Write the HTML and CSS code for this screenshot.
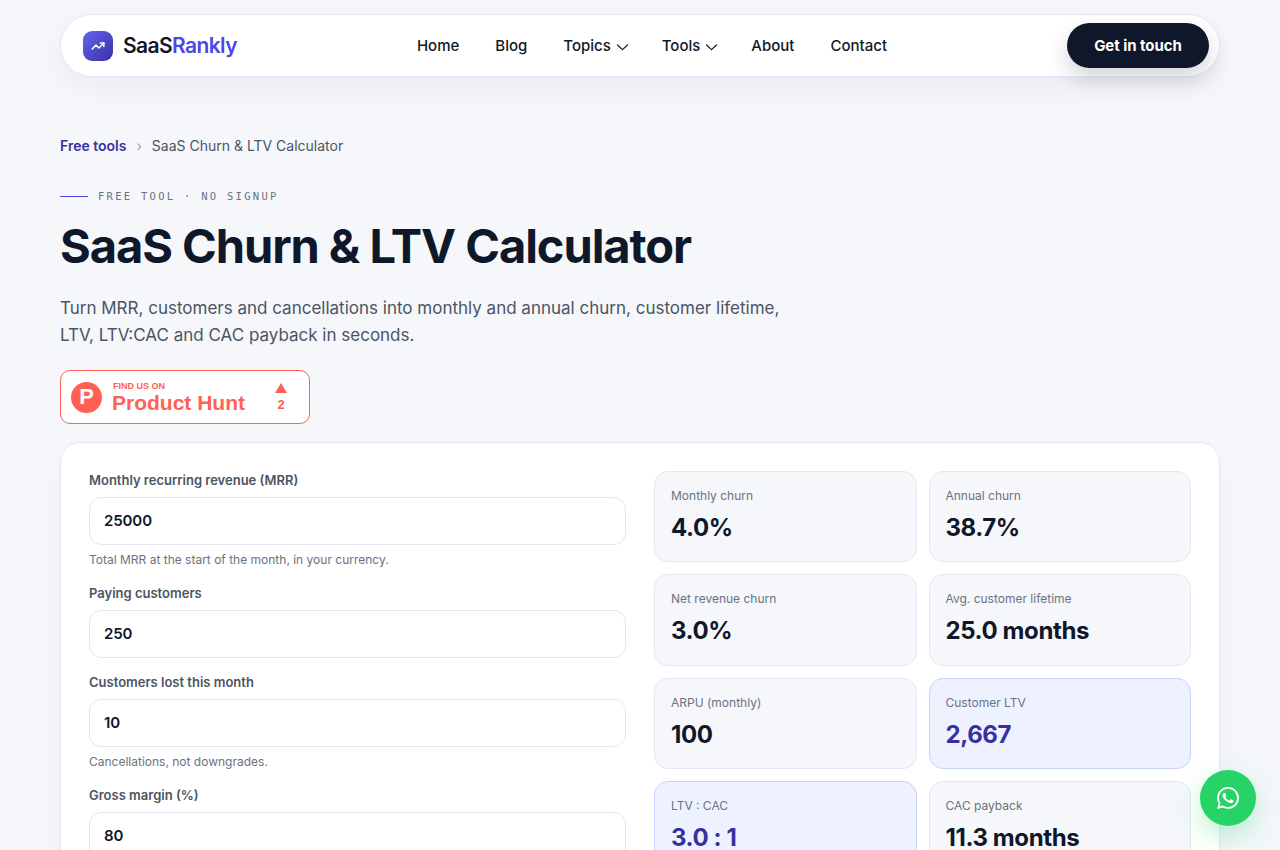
FILE: index.html
```html
<!DOCTYPE html>
<html lang="en">
<head>
<meta charset="utf-8">
<title>SaaS Churn &amp; LTV Calculator</title>
<link rel="stylesheet" href="styles.css">
</head>
<body>
<div class="page">
  <header class="nav">
    <a class="brand" href="#">
      <span class="brand-mark">
        <svg width="14" height="14" viewBox="0 0 24 24" fill="none" stroke="#fff" stroke-width="2.6" stroke-linecap="round" stroke-linejoin="round"><path d="M22 7l-8.5 8.5-5-5L2 17"/><path d="M16 7h6v6"/></svg>
      </span>
      <span class="brand-name">SaaS<span class="brand-accent">Rankly</span></span>
    </a>
    <nav class="nav-links">
      <a href="#">Home</a>
      <a href="#">Blog</a>
      <a href="#" class="has-caret">Topics<svg class="caret" width="15" height="12" viewBox="0 0 15 12" fill="none" stroke="currentColor" stroke-width="1.2" stroke-linecap="round" stroke-linejoin="round"><path d="M6.5 5l5 4.6 5-4.6"/></svg></a>
      <a href="#" class="has-caret">Tools<svg class="caret" width="15" height="12" viewBox="0 0 15 12" fill="none" stroke="currentColor" stroke-width="1.2" stroke-linecap="round" stroke-linejoin="round"><path d="M6.5 5l5 4.6 5-4.6"/></svg></a>
      <a href="#">About</a>
      <a href="#">Contact</a>
    </nav>
    <a class="cta" href="#">Get in touch</a>
  </header>

  <main>
    <div class="crumbs"><a href="#">Free tools</a><span class="crumb-sep">›</span><span>SaaS Churn &amp; LTV Calculator</span></div>
    <div class="eyebrow"><span class="eyebrow-line"></span>FREE TOOL · NO SIGNUP</div>
    <h1>SaaS Churn &amp; LTV Calculator</h1>
    <p class="lead">Turn MRR, customers and cancellations into monthly and annual churn, customer lifetime, LTV, LTV:CAC and CAC payback in seconds.</p>

    <a class="ph-badge" href="#">
      <span class="ph-logo">P</span>
      <span class="ph-text"><span class="ph-small">FIND US ON</span><span class="ph-big">Product Hunt</span></span>
      <span class="ph-votes"><span class="ph-tri"></span><span class="ph-count">2</span></span>
    </a>

    <section class="card">
      <form class="form">
        <div class="field">
          <label>Monthly recurring revenue (MRR)</label>
          <div class="input">25000</div>
          <p class="hint">Total MRR at the start of the month, in your currency.</p>
        </div>
        <div class="field">
          <label>Paying customers</label>
          <div class="input">250</div>
        </div>
        <div class="field">
          <label>Customers lost this month</label>
          <div class="input">10</div>
          <p class="hint">Cancellations, not downgrades.</p>
        </div>
        <div class="field">
          <label>Gross margin (%)</label>
          <div class="input">80</div>
        </div>
      </form>
      <div class="stats">
        <div class="stat"><div class="stat-label">Monthly churn</div><div class="stat-value">4.0%</div></div>
        <div class="stat"><div class="stat-label">Annual churn</div><div class="stat-value">38.7%</div></div>
        <div class="stat"><div class="stat-label">Net revenue churn</div><div class="stat-value">3.0%</div></div>
        <div class="stat"><div class="stat-label">Avg. customer lifetime</div><div class="stat-value">25.0 months</div></div>
        <div class="stat"><div class="stat-label">ARPU (monthly)</div><div class="stat-value">100</div></div>
        <div class="stat stat-hi"><div class="stat-label">Customer LTV</div><div class="stat-value">2,667</div></div>
        <div class="stat stat-hi"><div class="stat-label">LTV : CAC</div><div class="stat-value">3.0 : 1</div></div>
        <div class="stat"><div class="stat-label">CAC payback</div><div class="stat-value">11.3 months</div></div>
      </div>
    </section>
  </main>
</div>
<a class="wa" href="#" aria-label="WhatsApp">
  <svg width="22" height="22" viewBox="0 0 24 24" fill="#fff"><path d="M17.47 14.38c-.3-.15-1.76-.87-2.03-.97-.27-.1-.47-.15-.67.15-.2.3-.77.97-.94 1.16-.17.2-.35.22-.64.08-.3-.15-1.26-.46-2.39-1.48-.88-.79-1.48-1.76-1.65-2.06-.17-.3-.02-.46.13-.6.13-.14.3-.35.45-.52.15-.17.2-.3.3-.5.1-.2.05-.37-.03-.52-.07-.15-.67-1.61-.92-2.2-.24-.58-.49-.5-.67-.51h-.57c-.2 0-.52.07-.79.37-.27.3-1.04 1.02-1.04 2.48s1.07 2.88 1.21 3.07c.15.2 2.1 3.2 5.08 4.49.71.3 1.26.49 1.7.63.71.22 1.36.19 1.87.12.57-.09 1.76-.72 2.01-1.42.25-.69.25-1.29.17-1.41-.07-.13-.27-.2-.57-.35zM12.05 21.79h-.01a9.87 9.87 0 0 1-5.03-1.38l-.36-.21-3.74.98 1-3.65-.24-.37a9.86 9.86 0 0 1-1.51-5.26c0-5.45 4.44-9.88 9.89-9.88 2.64 0 5.12 1.03 6.99 2.9a9.83 9.83 0 0 1 2.89 6.99c0 5.45-4.44 9.88-9.88 9.88zM20.46 3.49A11.82 11.82 0 0 0 12.05 0C5.5 0 .16 5.34.16 11.89c0 2.1.55 4.14 1.59 5.95L.06 24l6.31-1.65a11.88 11.88 0 0 0 5.68 1.45h.01c6.55 0 11.89-5.34 11.89-11.89 0-3.18-1.24-6.17-3.49-8.42z"/></svg>
</a>
</body>
</html>
```
FILE: styles.css
```css
* { box-sizing: border-box; }
html, body { margin: 0; padding: 0; }
body {
  background: #f5f7fb;
  color: #0f172a;
  font-family: Inter, "Liberation Sans", sans-serif;
}
a { text-decoration: none; color: inherit; }
.page { width: 1160px; margin: 0 auto; padding-top: 14px; }

.nav {
  height: 63px;
  background: #fff;
  border: 1px solid #e4e7f3;
  border-radius: 32px;
  padding: 0 10px 0 22px;
  display: flex;
  align-items: center;
  justify-content: space-between;
  box-shadow: 0 10px 30px rgba(15, 23, 42, 0.05);
}
.brand { display: flex; align-items: center; gap: 10px; }
.brand-mark {
  width: 30px; height: 30px; border-radius: 9px;
  background: linear-gradient(135deg, #6366f1, #3730a3);
  display: flex; align-items: center; justify-content: center;
}
.brand-name { font-size: 21px; font-weight: 600; letter-spacing: -0.6px; color: #0f172a; }
.brand-accent { color: #4f46e5; }
.nav-links { display: flex; align-items: center; gap: 36px; font-size: 15px; font-weight: 500; color: #111827; }
.has-caret { display: flex; align-items: center; }
.caret { overflow: visible; }
.cta {
  width: 142px; height: 45px; border-radius: 23px;
  background: #0f172a; color: #fff;
  font-size: 15px; font-weight: 700; letter-spacing: -0.05px;
  display: flex; align-items: center; justify-content: center;
  box-shadow: 0 10px 22px rgba(15, 23, 42, 0.18);
}

.crumbs { margin-top: 59px; display: flex; align-items: center; font-size: 14px; line-height: 20px; color: #4b5563; }
.crumbs a { color: #3730a3; font-weight: 600; }
.crumb-sep { margin: 0 10px; color: #9ca3af; }

.eyebrow {
  margin-top: 32px;
  display: flex; align-items: center; gap: 10px;
  font-family: "DejaVu Sans Mono", "Liberation Mono", monospace;
  font-size: 10.5px; line-height: 16px; letter-spacing: 2.28px; color: #6b7280;
}
.eyebrow-line { width: 28px; height: 1px; background: #4f46e5; }

h1 { margin: 13px 0 0; font-size: 47px; line-height: 58px; font-weight: 700; letter-spacing: -1.05px; color: #0f172a; }
.lead { margin: 20px 0 0; max-width: 740px; font-size: 17px; line-height: 27px; color: #4b5563; }

.ph-badge {
  margin-top: 21px;
  width: 250px; height: 54px;
  background: #fff; border: 1px solid #ff6154; border-radius: 10px;
  padding: 0 22px 0 10px;
  display: flex; align-items: center; color: #ff6154;
  font-family: "Liberation Sans", Arial, sans-serif;
}
.ph-logo {
  width: 31px; height: 31px; border-radius: 50%;
  background: #ff6154; color: #fff;
  font-size: 22px; font-weight: 700;
  display: flex; align-items: center; justify-content: center;
}
.ph-text { margin-left: 10px; display: flex; flex-direction: column; flex: 1; }
.ph-small { font-size: 9px; line-height: 10px; font-weight: 700; margin: 0 0 1px 1px; }
.ph-big { font-size: 21px; line-height: 22px; font-weight: 700; }
.ph-votes { display: flex; flex-direction: column; align-items: center; gap: 5px; }
.ph-tri { width: 0; height: 0; border-left: 6px solid transparent; border-right: 6px solid transparent; border-bottom: 10px solid #ff6154; }
.ph-count { font-size: 13px; line-height: 13px; font-weight: 700; }

.card {
  margin-top: 18px;
  background: #fff;
  border: 1px solid #e4e7f3;
  border-radius: 20px;
  padding: 28px;
  display: grid;
  grid-template-columns: 1fr 1fr;
  gap: 28px;
  box-shadow: 0 10px 30px rgba(15, 23, 42, 0.03);
}
.form { display: flex; flex-direction: column; gap: 15px; }
.field label { display: block; font-size: 13px; line-height: 19.5px; font-weight: 600; color: #4b5563; margin-bottom: 6.5px; }
.input {
  height: 48px; border: 1px solid #e4e7f3; border-radius: 12px;
  padding: 0 14px 2px; background: #fff;
  display: flex; align-items: center;
  font-size: 15px; font-weight: 600; letter-spacing: -0.1px; color: #0f172a;
}
.hint { margin: 6px 0 0; font-size: 12px; line-height: 18px; color: #6b7280; }

.stats { display: grid; grid-template-columns: 1fr 1fr; gap: 12px; align-content: start; }
.stat {
  height: 91.3px;
  background: #f5f7fb; border: 1px solid #e4e7f3; border-radius: 14px;
  padding: 16px;
}
.stat-label { font-size: 12px; line-height: 16px; color: #6b7280; }
.stat-value { margin-top: 9px; font-size: 24px; line-height: 30px; font-weight: 700; letter-spacing: -0.4px; color: #0f172a; }
.stat-hi { background: #eef2ff; border-color: #c7d2fe; }
.stat-hi .stat-value { color: #3730a3; }

.wa {
  position: fixed; right: 24px; bottom: 24px;
  width: 56px; height: 56px; border-radius: 50%;
  background: #25d366;
  display: flex; align-items: center; justify-content: center;
  box-shadow: 0 10px 28px rgba(37, 211, 102, 0.3);
}
```
